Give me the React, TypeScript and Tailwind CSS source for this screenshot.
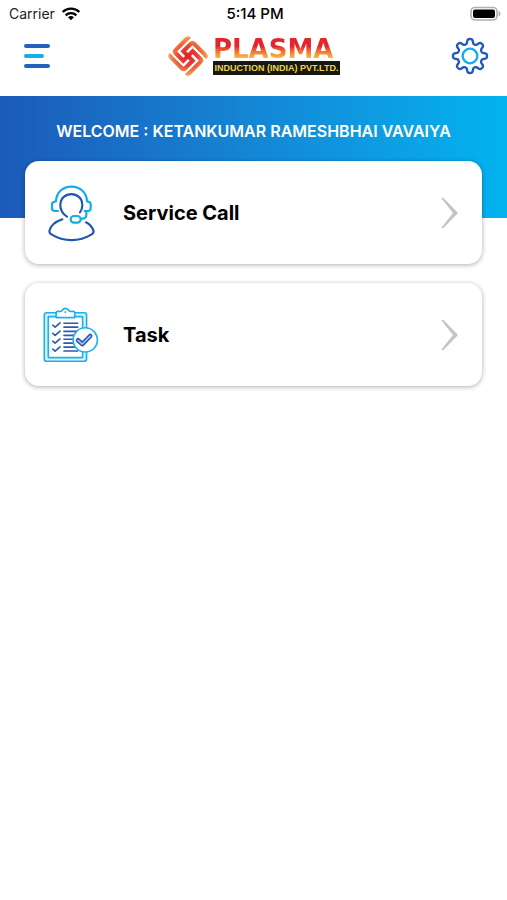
import React from "react";

const GEAR_PATH =
  Array.from({ length: 240 }, (_, i) => {
    const t = (i / 240) * Math.PI * 2;
    const r = 44 + (7 * Math.tanh(1.8 * Math.cos(8 * t))) / Math.tanh(1.8);
    return `${i === 0 ? "M" : "L"}${(r * Math.sin(t)).toFixed(2)} ${(-r * Math.cos(t)).toFixed(2)}`;
  }).join("") + "Z";

function WifiIcon() {
  return (
    <svg className="h-4 w-5" viewBox="0 0 60 48" fill="none" stroke="#000" strokeWidth="7" aria-hidden="true">
      <path d="M5 18a36 36 0 0 1 50 0" />
      <path d="M14 28a23 23 0 0 1 32 0" />
      <path d="M21 34a13 13 0 0 1 18 0L30 43z" fill="#000" stroke="none" />
    </svg>
  );
}

function BatteryIcon() {
  return (
    <svg className="h-4 w-[31px]" viewBox="0 0 31 16" aria-label="Battery full">
      <rect x="1" y="1.5" width="26" height="12.500" rx="4" fill="#fff" stroke="#b0b0b0" strokeWidth="1.6" />
      <rect x="3" y="3.5" width="22" height="8.500" rx="2" fill="#000" />
      <path d="M28.5 5v5.500q2-.8 2-2.750t-2-2.750z" fill="#b0b0b0" />
    </svg>
  );
}

function GearIcon() {
  return (
    <svg className="size-[38px]" viewBox="-57 -57 114 114" fill="none" strokeWidth="7" aria-hidden="true">
      <path d={GEAR_PATH} stroke="#2059b8" strokeLinejoin="round" />
      <circle r="22" stroke="#16aee8" />
    </svg>
  );
}

function Emblem() {
  return (
    <svg className="size-[42px]" viewBox="-63 -63 126 126" fill="none" aria-hidden="true">
      <defs>
        <radialGradient id="emblem" gradientUnits="userSpaceOnUse" cx="0" cy="0" r="58">
          <stop offset="0" stopColor="#e0202b" />
          <stop offset="0.5" stopColor="#e8432f" />
          <stop offset="1" stopColor="#f6a055" />
        </radialGradient>
      </defs>
      <g transform="rotate(45)" stroke="url(#emblem)" strokeWidth="12.500">
        {[0, 90, 180, 270].map((a) => (
          <path key={a} transform={`rotate(${a})`} d="M0 0H-20V-32q0 -7 7 -7H32q7 0 7 7" />
        ))}
      </g>
    </svg>
  );
}

function AgentIcon() {
  return (
    <svg
      className="h-[58px] w-[49px]"
      viewBox="81 69 147 174"
      fill="none"
      strokeWidth="6.500"
      strokeLinecap="round"
      strokeLinejoin="round"
      aria-hidden="true"
    >
      <g stroke="#12ade8">
        <path d="M114 150H104Q96 150 96 142V130Q96 122 108 121C110 62 199 62 201 121Q212 122 212 130V142Q212 150 204 150H194" />
        <path d="M199 150V162Q199 171 190 173H183" />
        <rect x="152" y="165" width="30" height="20" rx="10" />
      </g>
      <g stroke="#2056b4">
        <path d="M141 167C126 158 121 145 121 133C121 88 187 88 187 133Q187 145 180 154" />
        <path d="M127 175C106 182 91 195 88 211Q88 217 94 220C132 243 177 243 215 220Q221 217 221 211C218 201 210 190 198 184" />
      </g>
    </svg>
  );
}

function TaskIcon() {
  return (
    <svg
      className="h-[58px] w-[57px]"
      viewBox="69 78 171 174"
      fill="none"
      strokeWidth="5"
      strokeLinecap="round"
      strokeLinejoin="round"
      aria-hidden="true"
    >
      <g stroke="#1bb1ea">
        <rect x="73" y="97" width="129" height="148" rx="7" fill="#d8f3fd" />
        <rect x="85" y="109" width="105" height="125" rx="1" fill="#fff" />
        <path d="M109 112V97Q109 93 114 93H123Q126 93 128 89Q137 78 147 89Q149 93 152 93H161Q166 93 166 97V112Z" fill="#fff" />
      </g>
      <circle cx="137" cy="95" r="2.500" fill="#2056b4" />
      <g stroke="#2f58ae">
        {[135, 160, 184, 208].map((y) => (
          <g key={y}>
            <path d={`M99 ${y}L106 ${y + 6}L121 ${y - 7}`} />
            <path d={`M133 ${y - 6}H175M133 ${y + 6}H175`} />
          </g>
        ))}
      </g>
      <circle cx="198" cy="180" r="37" fill="#fff" stroke="#1bb1ea" />
      <path d="M176 181L189 193L213 168" stroke="#2f58ae" strokeWidth="14" />
      <path d="M176 181L189 193L213 168" stroke="#b9d3f5" strokeWidth="4" />
    </svg>
  );
}

function MenuCard({ label, icon }: { label: string; icon: React.ReactNode }) {
  return (
    <button
      type="button"
      className="flex h-[103px] w-full items-center rounded-[14px] bg-white pr-6 pl-[18px] text-left shadow-[0_1px_5px_rgba(0,0,0,0.32)]"
    >
      <span className="flex w-14 shrink-0 justify-center">{icon}</span>
      <span className="ml-6 flex-1 text-xl leading-7 font-bold text-black">{label}</span>
      <svg className="h-8 w-[17px]" viewBox="0 0 17 32" fill="#c4c4c4" aria-hidden="true">
        <path d="M0.500 1.500L2 .5L17 16L2 31.500L0.500 30.500L12 16z" />
      </svg>
    </button>
  );
}

export default function App() {
  return (
    <div className="min-h-screen bg-white font-['Inter','Liberation_Sans',sans-serif]">
      <div className="grid h-7 grid-cols-3 items-center pr-1.5 pl-[9px] text-sm leading-5 text-black">
        <div className="flex items-center gap-1.5">
          <span className="text-[#222]">Carrier</span>
          <WifiIcon />
        </div>
        <span className="text-center text-[15px] font-medium">5:14 PM</span>
        <div className="flex justify-end">
          <BatteryIcon />
        </div>
      </div>

      <header className="flex h-[68px] items-center justify-between pr-[18px] pb-3 pl-6">
        <button type="button" aria-label="Menu" className="flex w-8 flex-col gap-1.5">
          <span className="h-1 w-[26px] rounded-full bg-[#2460bd]" />
          <span className="h-1 w-5 rounded-full bg-[#16aee8]" />
          <span className="h-1 w-[26px] rounded-full bg-[#2460bd]" />
        </button>
        <div className="flex items-center gap-1">
          <Emblem />
          <div className="flex w-[127px] flex-col">
            <span className="bg-linear-to-b from-[#e3262c] from-40% to-[#fbc03a] to-90% bg-clip-text font-['DejaVu_Sans',sans-serif] text-[26px] leading-6 font-bold text-transparent">
              PLASMA
            </span>
            <span className="bg-[#191712] text-center font-['Liberation_Sans',sans-serif] text-[9px] leading-[14px] font-bold whitespace-nowrap text-[#e9d84a]">
              INDUCTION (INDIA) PVT.LTD.
            </span>
          </div>
        </div>
        <button type="button" aria-label="Settings">
          <GearIcon />
        </button>
      </header>

      <section className="h-[122px] bg-linear-to-r from-[#1c5ab9] to-[#02b3f0] px-6 pt-6">
        <h1 className="text-center text-base leading-[22px] font-semibold text-white">
          WELCOME : KETANKUMAR RAMESHBHAI VAVAIYA
        </h1>
      </section>

      <main className="-mt-[57px] flex flex-col gap-[19px] px-[25px]">
        <MenuCard label="Service Call" icon={<AgentIcon />} />
        <MenuCard label="Task" icon={<TaskIcon />} />
      </main>
    </div>
  );
}
